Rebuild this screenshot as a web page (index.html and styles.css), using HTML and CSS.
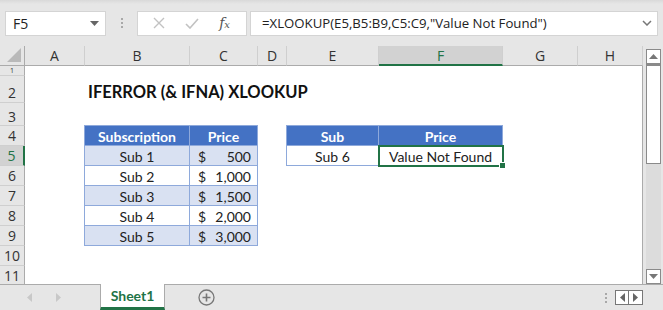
FILE: index.html
```html
<!DOCTYPE html>
<html lang="en">
<head>
  <meta charset="UTF-8">
  <title>IFERROR XLOOKUP</title>
  <link rel="stylesheet" href="styles.css">
</head>
<body>
  <div class="formula-bar">
    <div class="name-box">
      <span>F5</span>
      <svg class="caret" width="9" height="5" viewBox="0 0 9 5"><path d="M0 0h9L4.5 5z" fill="#666"/></svg>
    </div>
    <div class="grip"><i></i><i></i><i></i></div>
    <div class="fx-box">
      <svg width="12" height="12" viewBox="0 0 12 12"><path d="M1 1l10 10M11 1L1 11" stroke="#c2c2c2" stroke-width="1.4"/></svg>
      <svg width="14" height="11" viewBox="0 0 14 11"><path d="M1 6l4 4 8-9" stroke="#c2c2c2" stroke-width="1.6" fill="none"/></svg>
      <span class="fx">f<small>x</small></span>
    </div>
    <div class="formula">
      <span>=XLOOKUP(E5,B5:B9,C5:C9,"Value Not Found")</span>
      <svg width="10" height="6" viewBox="0 0 10 6"><path d="M1 1l4 4 4-4" stroke="#777" stroke-width="1.5" fill="none"/></svg>
    </div>
  </div>

  <div class="main">
    <div class="sheet">
      <div class="corner"><svg width="14" height="14" viewBox="0 0 14 14"><path d="M14 0v14H0z" fill="#b9b9b9"/></svg></div>
      <div class="col-head">A</div>
      <div class="col-head">B</div>
      <div class="col-head">C</div>
      <div class="col-head">D</div>
      <div class="col-head">E</div>
      <div class="col-head active">F</div>
      <div class="col-head">G</div>
      <div class="col-head">H</div>

      <div class="row-head r1"><span>1</span></div>
      <div class="row-head r2">2</div>
      <div class="row-head r3">3</div>
      <div class="row-head r4">4</div>
      <div class="row-head r5 active">5</div>
      <div class="row-head r6">6</div>
      <div class="row-head r7">7</div>
      <div class="row-head r8">8</div>
      <div class="row-head r9">9</div>
      <div class="row-head r10">10</div>
      <div class="row-head r11">11</div>

      <div class="title">IFERROR (&amp; IFNA) XLOOKUP</div>

      <div class="table subs">
        <div class="th">Subscription</div><div class="th">Price</div>
        <div class="td band">Sub 1</div><div class="td band money"><span>$</span><span>500</span></div>
        <div class="td">Sub 2</div><div class="td money"><span>$</span><span>1,000</span></div>
        <div class="td band">Sub 3</div><div class="td band money"><span>$</span><span>1,500</span></div>
        <div class="td">Sub 4</div><div class="td money"><span>$</span><span>2,000</span></div>
        <div class="td band">Sub 5</div><div class="td band money"><span>$</span><span>3,000</span></div>
      </div>

      <div class="table lookup">
        <div class="th">Sub</div><div class="th">Price</div>
        <div class="td">Sub 6</div><div class="td selected">Value Not Found<b class="handle"></b></div>
      </div>

      <div class="grid-edge"></div>
    </div>

    <div class="vscroll">
      <div class="sbtn"><svg width="9" height="5" viewBox="0 0 9 5"><path d="M4.5 0L9 5H0z" fill="#777"/></svg></div>
      <div class="thumb"></div>
      <div class="track"></div>
      <div class="sbtn"><svg width="9" height="5" viewBox="0 0 9 5"><path d="M0 0h9L4.5 5z" fill="#777"/></svg></div>
    </div>
  </div>

  <div class="tabbar">
    <div class="tab-nav">
      <svg width="5" height="9" viewBox="0 0 5 9"><path d="M5 0v9L0 4.5z" fill="#c8c8c8"/></svg>
      <svg width="5" height="9" viewBox="0 0 5 9"><path d="M0 0v9l5-4.5z" fill="#c8c8c8"/></svg>
    </div>
    <div class="tab">Sheet1</div>
    <div class="add-sheet">
      <svg width="17" height="17" viewBox="0 0 17 17"><circle cx="8.5" cy="8.5" r="7.5" stroke="#777" stroke-width="1.3" fill="none"/><path d="M8.5 4.5v8M4.5 8.5h8" stroke="#777" stroke-width="1.6"/></svg>
    </div>
    <div class="spacer"></div>
    <div class="grip small"><i></i><i></i><i></i></div>
    <div class="hnav">
      <div class="hbtn"><svg width="5" height="9" viewBox="0 0 5 9"><path d="M5 0v9L0 4.5z" fill="#666"/></svg></div>
      <div class="hbtn"><svg width="5" height="9" viewBox="0 0 5 9"><path d="M0 0v9l5-4.5z" fill="#666"/></svg></div>
    </div>
  </div>
</body>
</html>
```

FILE: styles.css
```css
body {
  margin: 0;
  width: 663px;
  height: 310px;
  overflow: hidden;
  background-color: #e6e6e6;
  font-family: "Open Sans", "Noto Sans", sans-serif;
  color: #222;
}

/* formula bar */

.formula-bar {
  height: 46px;
  display: flex;
  align-items: center;
  padding: 0 5px;
  box-sizing: border-box;
  background: linear-gradient(#d9d9d9 0, #e6e6e6 4px);
}

.name-box, .fx-box, .formula {
  height: 25px;
  background-color: white;
  border: 1px solid #d4d4d4;
  box-sizing: border-box;
  display: flex;
  align-items: center;
}

.name-box {
  width: 101px;
  padding: 0 6px 0 7px;
  justify-content: space-between;
  font-size: 14px;
}

.grip {
  width: 31px;
  display: flex;
  flex-direction: column;
  align-items: center;
  gap: 2px;
}

.grip i {
  width: 2px;
  height: 2px;
  background-color: #a8a8a8;
}

.fx-box {
  width: 110px;
  padding: 0 16px 0 15px;
  justify-content: space-between;
}

.fx {
  font-family: "DejaVu Serif", serif;
  font-style: italic;
  font-size: 14px;
  color: #555;
}

.fx small {
  font-size: 10px;
}

.formula {
  width: 408px;
  margin-left: 3px;
  padding: 0 5px 0 11px;
  justify-content: space-between;
  font-size: 13.2px;
  color: #222;
}

/* sheet grid */

.main {
  display: flex;
  height: 238px;
}

.sheet {
  display: grid;
  grid-template-columns: 25px 60px 105px 68px 29px 92px 124px 75px 65px;
  grid-template-rows: 20px 10px 27px 23px repeat(7, 20px) 18px;
  background-color: white;
  font-family: Lato, "Open Sans", sans-serif;
  font-size: 14px;
  position: relative;
}

.corner, .col-head {
  background-color: #e6e6e6;
  border-bottom: 1px solid #ababab;
  border-right: 1px solid #cfcfcf;
  box-sizing: border-box;
}

.corner {
  display: flex;
  align-items: flex-end;
  justify-content: flex-end;
  padding: 0 3px 3px 0;
  border-right-color: #ababab;
}

.col-head {
  display: flex;
  align-items: center;
  justify-content: center;
  font-family: "Open Sans", sans-serif;
  font-size: 14px;
  color: #333;
}

.col-head.active {
  background-color: #d2d2d2;
  color: #217346;
  border-bottom: 2px solid #217346;
}

.row-head {
  grid-column: 1;
  background-color: #e6e6e6;
  border-right: 1px solid #ababab;
  border-bottom: 1px solid #cfcfcf;
  box-sizing: border-box;
  display: flex;
  align-items: center;
  justify-content: center;
  font-family: "Open Sans", sans-serif;
  font-size: 14px;
  color: #333;
  overflow: hidden;
}

.row-head.r1 {
  grid-row: 2;
  font-size: 7px;
  line-height: 8px;
}

.row-head.r2 { grid-row: 3; padding-top: 6px; }
.row-head.r3 { grid-row: 4; padding-top: 4px; }
.row-head.r4 { grid-row: 5; }
.row-head.r5 { grid-row: 6; }
.row-head.r6 { grid-row: 7; }
.row-head.r7 { grid-row: 8; }
.row-head.r8 { grid-row: 9; }
.row-head.r9 { grid-row: 10; }
.row-head.r10 { grid-row: 11; }
.row-head.r11 { grid-row: 12; border-bottom: none; }

.row-head.active {
  background-color: #d2d2d2;
  color: #217346;
  border-right: 2px solid #217346;
}

.title {
  grid-column: 3 / 7;
  grid-row: 3;
  padding: 5px 0 0 3px;
  font-weight: bold;
  font-size: 16.5px;
  color: #111;
  display: flex;
  align-items: center;
}

.grid-edge {
  grid-column: 10;
  grid-row: 2 / 13;
  width: 0;
  border-left: 1px solid #ababab;
  margin-left: -1px;
}

/* tables */

.table {
  display: grid;
  grid-auto-rows: 20px;
  border-left: 1px solid #8ea9db;
  border-top: 1px solid #8ea9db;
  margin: -1px 0 0 -1px;
}

.subs {
  grid-column: 3 / 5;
  grid-row: 5 / 11;
  grid-template-columns: 105px 68px;
}

.lookup {
  grid-column: 6 / 8;
  grid-row: 5 / 7;
  grid-template-columns: 92px 124px;
}

.th, .td {
  border-right: 1px solid #8ea9db;
  border-bottom: 1px solid #8ea9db;
  display: flex;
  align-items: center;
  justify-content: center;
  padding-top: 1px;
}

.th {
  background-color: #4472c4;
  color: white;
  font-weight: bold;
}

.td.band {
  background-color: #d9e1f2;
}

.td.money {
  justify-content: space-between;
  padding: 1px 6px 0 8px;
}

.td.selected {
  position: relative;
  outline: 2px solid #217346;
  outline-offset: -1px;
}

.handle {
  position: absolute;
  right: -4px;
  bottom: -4px;
  width: 5px;
  height: 5px;
  background-color: #217346;
  border: 1px solid white;
}

/* scrollbars */

.vscroll {
  width: 15px;
  margin: 3px 0 0 3px;
  display: flex;
  flex-direction: column;
  background-color: #dcdcdc;
}

.sbtn {
  height: 15px;
  border: 1px solid #8a8a8a;
  box-sizing: border-box;
  background-color: white;
  display: flex;
  align-items: center;
  justify-content: center;
}

.thumb {
  height: 100px;
  background-color: white;
  border: 1px solid #8a8a8a;
  border-top: 2px solid #8a8a8a;
  box-sizing: border-box;
}

.track {
  flex: 1;
}

/* sheet tabs */

.tabbar {
  height: 26px;
  border-top: 1px solid #ababab;
  box-sizing: border-box;
  display: flex;
  align-items: stretch;
}

.tab-nav {
  width: 100px;
  display: flex;
  align-items: center;
  gap: 24px;
  padding-left: 27px;
  box-sizing: border-box;
}

.tab {
  width: 65px;
  margin-top: -1px;
  background-color: white;
  border-left: 1px solid #ababab;
  border-right: 1px solid #ababab;
  border-bottom: 3px solid #217346;
  box-sizing: border-box;
  display: flex;
  align-items: center;
  justify-content: center;
  font-family: Lato, sans-serif;
  font-weight: bold;
  font-size: 14px;
  color: #217346;
}

.add-sheet {
  width: 82px;
  display: flex;
  align-items: center;
  justify-content: center;
  padding-bottom: 1px;
}

.spacer {
  flex: 1;
}

.grip.small {
  width: 18px;
  justify-content: center;
  gap: 2px;
}

.hnav {
  display: flex;
  align-items: center;
  margin-right: 20px;
}

.hbtn {
  width: 14px;
  height: 15px;
  border: 1px solid #777;
  box-sizing: border-box;
  background-color: white;
  display: flex;
  align-items: center;
  justify-content: center;
}

.hbtn + .hbtn {
  border-left: none;
}
```
